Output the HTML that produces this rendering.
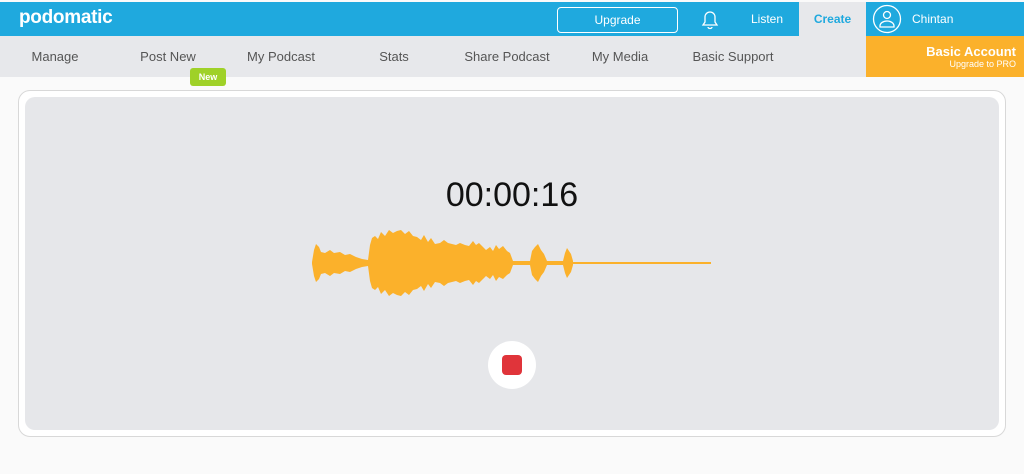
<!DOCTYPE html>
<html><head><style>
body{margin:0;width:1024px;height:474px;background:#fafafa;font-family:"Liberation Sans",sans-serif;position:relative;overflow:hidden}
.a{position:absolute}
.top{left:0;top:2px;width:1024px;height:34px;background:#1fa9de}
.nav{left:0;top:36px;width:1024px;height:41px;background:#e7e8eb}
.n{top:49px;font-size:13px;color:#555;transform:translateX(-50%)}
</style></head><body>
<div class="a top"></div>
<div class="a" style="left:19px;top:7px;color:#fff;font-weight:bold;font-size:19px;letter-spacing:-0.3px">podomatic</div>
<div class="a" style="left:557px;top:7px;width:119px;height:24px;border:1px solid #fff;border-radius:4px;color:#fff;font-size:12px;text-align:center;line-height:24px">Upgrade</div>
<svg class="a" style="left:698px;top:7px" width="24" height="24" viewBox="0 0 24 24" fill="none" stroke="#fff" stroke-width="1.3"><path d="M5 18h14l-2-3v-5a5 5 0 0 0-10 0v5z M10 20a2 1.5 0 0 0 4 0"/></svg>
<div class="a" style="left:751px;top:12px;color:#fff;font-size:12px">Listen</div>
<div class="a" style="left:799px;top:2px;width:67px;height:34px;background:#e7e8eb;color:#1fa9de;font-size:12px;font-weight:bold;text-align:center;line-height:34px">Create</div>
<svg class="a" style="left:872px;top:4px" width="30" height="30" viewBox="0 0 30 30" fill="none" stroke="#fff" stroke-width="1.3"><circle cx="15" cy="15" r="13.5"/><circle cx="15" cy="11" r="3.5"/><path d="M8 22a7 5 0 0 1 14 0v1H8z"/></svg>
<div class="a" style="left:912px;top:12px;color:#fff;font-size:12px">Chintan</div>
<div class="a nav"></div>
<div class="a n" style="left:55px">Manage</div>
<div class="a n" style="left:168px">Post New</div>
<div class="a n" style="left:281px">My Podcast</div>
<div class="a n" style="left:394px">Stats</div>
<div class="a n" style="left:507px">Share Podcast</div>
<div class="a n" style="left:620px">My Media</div>
<div class="a n" style="left:733px">Basic Support</div>
<div class="a" style="left:190px;top:68px;width:36px;height:18px;background:#9fd128;border-radius:3px;color:#fff;font-size:9px;font-weight:bold;text-align:center;line-height:18px">New</div>
<div class="a" style="left:866px;top:36px;width:158px;height:41px;background:#fbb12b;color:#fff;text-align:right">
<div style="padding:8px 8px 0 0;font-size:13px;font-weight:bold">Basic Account</div>
<div style="padding-right:8px;font-size:9px">Upgrade to PRO</div></div>
<div class="a" style="left:18px;top:90px;width:986px;height:345px;border:1px solid #d8d8d8;border-radius:12px;background:#fff"></div>
<div class="a" style="left:25px;top:97px;width:974px;height:333px;border-radius:10px;background:#e6e7ea"></div>
<div class="a" style="left:0;width:1024px;top:176px;text-align:center;font-size:34px;color:#111">00:00:16</div>
<svg class="a" style="left:0;top:0" width="1024" height="474">
<rect x="312" y="262" width="399" height="2" fill="#fbb12b"/>
<polygon fill="#fbb12b" points="312,262 314,250 316,244 319,247 321,252 325,253 330,250 334,253 340,252 345,255 350,254 356,257 362,259 368,260 370,245 372,238 375,236 378,239 381,232 385,236 389,230 393,233 397,231 401,230 405,234 409,231 413,236 417,237 421,240 424,235 428,242 431,238 435,244 440,243 444,240 448,243 452,244 456,245 460,243 465,245 469,246 473,241 476,245 479,243 483,247 486,250 490,247 493,251 496,245 499,249 503,246 507,251 510,253 513,261 530,261 532,251 535,247 538,244 541,250 544,254 547,261 563,261 565,253 567,248 569,251 571,254 573,261 573,265 571,272 569,275 567,278 565,273 563,265 547,265 544,272 541,276 538,282 535,279 532,275 530,265 513,265 510,273 507,275 503,279 499,277 496,281 493,275 490,279 486,276 483,279 479,283 476,281 473,285 469,280 465,281 460,283 456,281 452,282 448,283 444,286 440,283 435,282 431,288 428,284 424,291 421,286 417,289 413,290 409,295 405,292 401,296 397,295 393,293 389,296 385,290 381,294 378,287 375,290 372,288 370,281 368,266 362,267 356,269 350,272 345,271 340,274 334,273 330,276 325,273 321,274 319,279 316,282 314,276 312,264"/>
<circle cx="512" cy="365" r="24" fill="#fff"/>
<rect x="502" y="355" width="20" height="20" rx="4" fill="#e0343a"/>
</svg>
</body></html>
